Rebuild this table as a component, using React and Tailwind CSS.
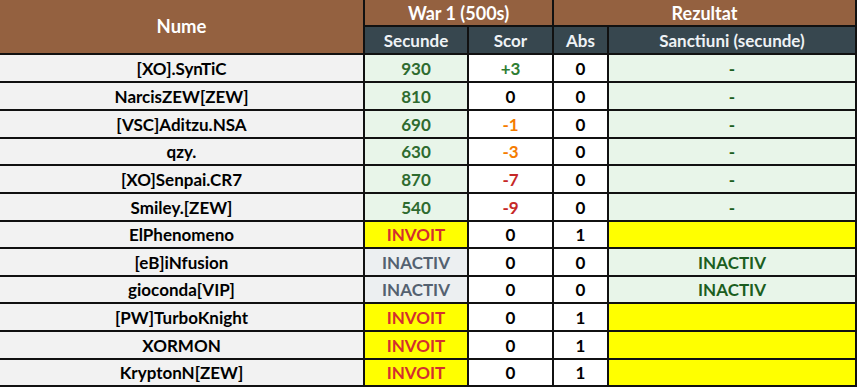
import React from "react";

const rows = [
  { n: "[XO].SynTiC", s: "930", sc: "+3", scc: "text-[#2e7d32]", a: "0", r: "-", t: "ok" },
  { n: "NarcisZEW[ZEW]", s: "810", sc: "0", scc: "text-black", a: "0", r: "-", t: "ok" },
  { n: "[VSC]Aditzu.NSA", s: "690", sc: "-1", scc: "text-[#f57c00]", a: "0", r: "-", t: "ok" },
  { n: "qzy.", s: "630", sc: "-3", scc: "text-[#f57c00]", a: "0", r: "-", t: "ok" },
  { n: "[XO]Senpai.CR7", s: "870", sc: "-7", scc: "text-[#c62828]", a: "0", r: "-", t: "ok" },
  { n: "Smiley.[ZEW]", s: "540", sc: "-9", scc: "text-[#c62828]", a: "0", r: "-", t: "ok" },
  { n: "ElPhenomeno", s: "INVOIT", sc: "0", scc: "text-black", a: "1", r: "", t: "inv" },
  { n: "[eB]iNfusion", s: "INACTIV", sc: "0", scc: "text-black", a: "0", r: "INACTIV", t: "ina" },
  { n: "gioconda[VIP]", s: "INACTIV", sc: "0", scc: "text-black", a: "0", r: "INACTIV", t: "ina" },
  { n: "[PW]TurboKnight", s: "INVOIT", sc: "0", scc: "text-black", a: "1", r: "", t: "inv" },
  { n: "XORMON", s: "INVOIT", sc: "0", scc: "text-black", a: "1", r: "", t: "inv" },
  { n: "KryptonN[ZEW]", s: "INVOIT", sc: "0", scc: "text-black", a: "1", r: "", t: "inv" },
];

const heights = ["h-[28px]", "h-[28px]", "h-[28px]", "h-[27px]", "h-[28px]", "h-[28px]", "h-[27px]", "h-[28px]", "h-[27px]", "h-[28px]", "h-[28px]", "h-[27px]"];

const cell = "flex items-center justify-center border-r-2 border-b-2 border-[#111]";

export default function App() {
  return (
    <div className="w-[858px] h-[387px] bg-white overflow-hidden font-['Lato',sans-serif] font-bold text-[17px] leading-none">
      <div className="grid grid-cols-[365px_104px_85px_55px_248px] w-[857px]">
        <div className={`${cell} row-span-2 bg-[#946140] text-white text-[18.5px] h-[55px]`}>Nume</div>
        <div className={`${cell} col-span-2 bg-[#946140] text-white text-[18px] h-[27px] border-b`}>War 1 (500s)</div>
        <div className={`${cell} col-span-2 bg-[#946140] text-white text-[18px] h-[27px] border-b`}>Rezultat</div>
        <div className={`${cell} bg-[#37474f] text-[#eef2f5] h-[28px]`}>Secunde</div>
        <div className={`${cell} bg-[#37474f] text-[#eef2f5] h-[28px]`}>Scor</div>
        <div className={`${cell} bg-[#37474f] text-[#eef2f5] h-[28px]`}>Abs</div>
        <div className={`${cell} bg-[#37474f] text-[#eef2f5] h-[28px]`}>Sanctiuni (secunde)</div>
        {rows.map((r, i) => {
          const h = heights[i];
          const sBg = r.t === "ok" ? "bg-[#e8f5e9] text-[#2e6b2f]" : r.t === "inv" ? "bg-[#ffff00] text-[#d32f2f]" : "bg-[#eceff1] text-[#546170]";
          const rBg = r.t === "inv" ? "bg-[#ffff00]" : "bg-[#e8f5e9] text-[#1b5e20]";
          return (
            <React.Fragment key={i}>
              <div className={`${cell} ${h} bg-[#f2f2f2] text-black`}>{r.n}</div>
              <div className={`${cell} ${h} ${sBg}`}>{r.s}</div>
              <div className={`${cell} ${h} bg-white ${r.scc}`}>{r.sc}</div>
              <div className={`${cell} ${h} bg-white text-black`}>{r.a}</div>
              <div className={`${cell} ${h} ${rBg}`}>{r.r}</div>
            </React.Fragment>
          );
        })}
      </div>
    </div>
  );
}
